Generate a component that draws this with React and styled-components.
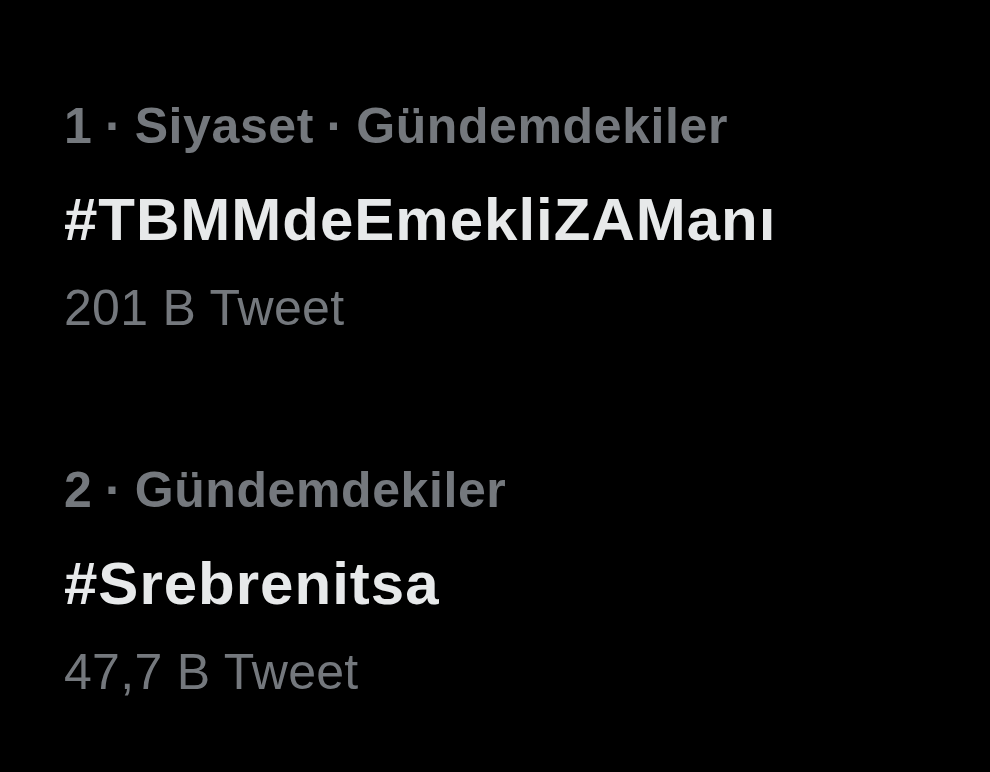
import React from "react";
import styled, { createGlobalStyle } from "styled-components";

const GlobalStyle = createGlobalStyle`
  html, body {
    margin: 0;
    padding: 0;
    background: #000;
  }
  body {
    font-family: "Liberation Sans", Arial, sans-serif;
    -webkit-font-smoothing: antialiased;
  }
`;

const Page = styled.div`
  width: 990px;
  height: 772px;
  background: #000;
  box-sizing: border-box;
  padding: 97px 0 0 64px;
  display: flex;
  flex-direction: column;
  gap: 124px;
`;

const Trend = styled.div`
  display: flex;
  flex-direction: column;
`;

const Category = styled.div`
  font-size: 50px;
  line-height: 58px;
  font-weight: 700;
  letter-spacing: 0.6px;
  word-spacing: -2px;
  color: #74787d;
`;

const Title = styled.div`
  margin-top: 31px;
  font-size: 60px;
  line-height: 68px;
  font-weight: 700;
  letter-spacing: 1px;
  color: #e7e9ea;
`;

const Count = styled.div`
  margin-top: 25px;
  font-size: 50px;
  line-height: 58px;
  font-weight: 400;
  letter-spacing: 0.3px;
  color: #74787d;
`;

const trends = [
  { rank: 1, context: ["Siyaset", "Gündemdekiler"], tag: "#TBMMdeEmekliZAManı", count: "201 B Tweet" },
  { rank: 2, context: ["Gündemdekiler"], tag: "#Srebrenitsa", count: "47,7 B Tweet" }
];

function App() {
  return (
    <>
      <GlobalStyle />
      <Page>
        {trends.map((t) => (
          <Trend key={t.rank}>
            <Category>{[t.rank, ...t.context].join(" · ")}</Category>
            <Title>{t.tag}</Title>
            <Count>{t.count}</Count>
          </Trend>
        ))}
      </Page>
    </>
  );
}

export default App;
